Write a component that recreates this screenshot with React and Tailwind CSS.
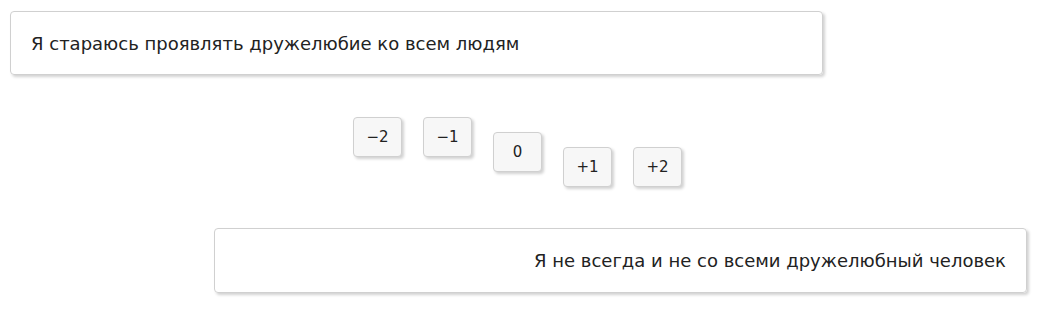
const SCALE = [
  { label: '−2', mt: 'mt-0' },
  { label: '−1', mt: 'mt-0' },
  { label: '0', mt: 'mt-[15px]' },
  { label: '+1', mt: 'mt-[30px]' },
  { label: '+2', mt: 'mt-[30px]' },
]

export default function App() {
  return (
    <div className="w-[1039px] h-[320px] bg-white text-[#222] font-['DejaVu_Sans',sans-serif] pt-[11px]">
      {/* верхнее утверждение */}
      <div className="ml-[10px] w-[813px] h-[64px] flex items-center px-5 border border-[#d0d0d0] rounded-[4px] shadow-[2px_2px_3px_rgba(0,0,0,0.18)] text-[18px]">
        Я стараюсь проявлять дружелюбие ко всем людям
      </div>

      {/* шкала */}
      <div className="flex justify-center gap-[21px] mt-[42px] h-[111px] pr-[4px]">
        {SCALE.map(({ label, mt }) => (
          <button
            key={label}
            className={`${mt} w-[49px] h-[40px] flex items-center justify-center bg-[#f7f7f7] border border-[#d0d0d0] rounded-[4px] shadow-[2px_2px_3px_rgba(0,0,0,0.18)] text-[15px] text-[#222]`}
          >
            {label}
          </button>
        ))}
      </div>

      {/* нижнее утверждение */}
      <div className="ml-[214px] w-[813px] h-[65px] flex items-center justify-end px-5 border border-[#d0d0d0] rounded-[4px] shadow-[2px_2px_3px_rgba(0,0,0,0.18)] text-[18px]">
        Я не всегда и не со всеми дружелюбный человек
      </div>
    </div>
  )
}
